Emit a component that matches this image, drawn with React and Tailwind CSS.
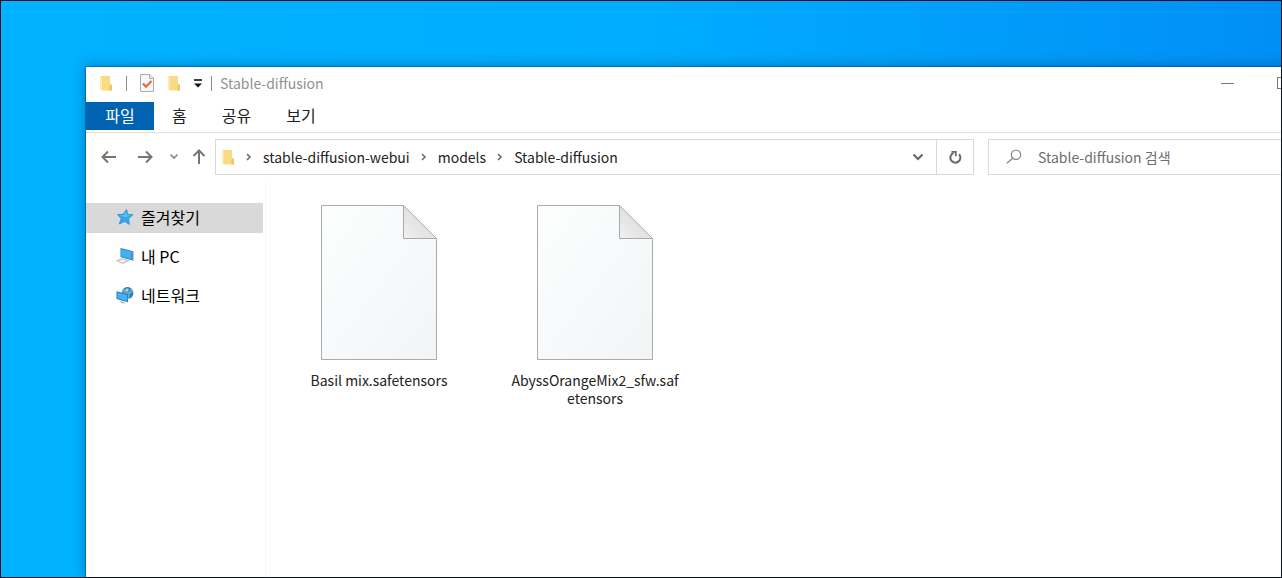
import React, { useState } from 'react';

const FolderIcon = () => (
  <svg width="14" height="16" viewBox="0 0 14 16" className="shrink-0">
    <path d="M1 1h8v13H1z" fill="#f3cf6b" />
    <path d="M2 1h9v8l2 1v5.5H3z" fill="#f9db84" />
    <path d="M1 1l2 1v13.5l-2-1z" fill="#fdeab0" />
    <path d="M10.5 9l2.500 1v5.500h-2.500z" fill="#efc75c" />
  </svg>
);

const PropertiesIcon = () => (
  <svg width="16" height="18" viewBox="0 0 16 18" className="shrink-0">
    <path d="M1.5.5h9.5l3.5 3.5v13.5h-13z" fill="#f6f7f8" stroke="#a9acb0" />
    <path d="M10.5.5v4h4" fill="#e4e5e7" stroke="#a9acb0" />
    <path d="M4 9.5l3 3.2 5.5-5.7" fill="none" stroke="#e9683c" strokeWidth="2.2" />
  </svg>
);

const CustomizeIcon = () => (
  <svg width="10" height="10" viewBox="0 0 10 10">
    <path d="M1 2h8" stroke="#111" strokeWidth="1.6" />
    <path d="M1 5.5h8L5 9.5z" fill="#111" />
  </svg>
);

const ArrowIcon = ({ className }) => (
  <svg width="16" height="16" viewBox="0 0 16 16" className={className}>
    <path d="M1.5 8H15M7 2.5L1.5 8 7 13.5" fill="none" stroke="#757575" strokeWidth="2" />
  </svg>
);

const ChevronRight = () => (
  <svg width="6" height="8" viewBox="0 0 6 8" className="shrink-0">
    <path d="M1 1l3 3-3 3" fill="none" stroke="#6b6b6b" strokeWidth="1.6" />
  </svg>
);

const RefreshIcon = () => (
  <svg width="14" height="14" viewBox="0 0 14 14">
    <path d="M11 4.2A5 5 0 1 1 5.5 3" fill="none" stroke="#6b6b6b" strokeWidth="2" />
    <path d="M3.5 1.8h4.3v4.4" fill="none" stroke="#6b6b6b" strokeWidth="1.8" />
  </svg>
);

const SearchIcon = () => (
  <svg width="16" height="16" viewBox="0 0 16 16" className="shrink-0">
    <circle cx="10" cy="5.7" r="4.7" fill="none" stroke="#858585" strokeWidth="1.2" />
    <path d="M6.7 9.2L.8 14.2" stroke="#858585" strokeWidth="1.3" />
  </svg>
);

const StarIcon = () => (
  <svg width="18" height="18" viewBox="0 0 18 18">
    <path
      d="M10.500 1.500l1.300 4.700 5.200.6-4.300 3.800.6 5.900-4.500-3-5.600 2.500 1.900-5.400L1.500 6.500l5.600-.2z"
      fill="#35a6ee"
      stroke="#2b8fd6"
      strokeWidth=".8"
    />
    <path d="M10.200 3.500l.8 3.500 3.600.5-4.800 2L3.800 7.200l3.800-.1z" fill="#5bbdf8" />
  </svg>
);

const PcIcon = () => (
  <svg width="18" height="18" viewBox="0 0 18 18">
    <path d="M4.5 1l12 3v9.5l-12-3.5z" fill="#2c83bd" />
    <path d="M5.2 2l10.3 2.7v7.5L5.2 9.3z" fill="#42b0f3" />
    <path d="M16.5 4l.9.5v9.3l-.9-.3z" fill="#47647a" />
    <path d="M.5 13.5l6-2 6.5 2.2-6.5 2.900z" fill="#d3d7da" stroke="#a9adb1" strokeWidth=".6" />
    <path d="M3 13.7l3.8-1.2 3.5 1.2-4 1.6z" fill="#f2f3f4" />
  </svg>
);

const NetworkIcon = () => (
  <svg width="18" height="18" viewBox="0 0 18 18">
    <circle cx="11.5" cy="7" r="6" fill="#5fa6cf" />
    <path d="M8 2.5c2-1.7 5-1.6 7 .2l-2 2.5-3 .4zM14 8l3-2c.5 3-1 5.7-3.4 6.5z" fill="#2e7daf" />
    <path d="M8.7 4l2.4-1.7 2 1-2 2.7z" fill="#a8d5ea" />
    <path d="M.5 5.2l11.500 3v8L.5 13z" fill="#2578b5" />
    <path d="M1.4 6.4l9.8 2.500v6L1.4 12.2z" fill="#43b1f5" />
    <path d="M4 15l3.6 1 1.8 1.4-4-.4z" fill="#9aa7b0" />
  </svg>
);

const FileIcon = () => (
  <svg width="116" height="155" viewBox="0 0 116 155">
    <defs>
      <linearGradient id="page" x1="0" y1="0" x2="1" y2="1">
        <stop offset="0" stopColor="#fdfefe" />
        <stop offset="1" stopColor="#f2f4f6" />
      </linearGradient>
      <linearGradient id="fold" x1="0" y1="1" x2="1" y2="0">
        <stop offset="0" stopColor="#f1f1f2" />
        <stop offset="1" stopColor="#d2d3d4" />
      </linearGradient>
    </defs>
    <path d="M.5.5h82l33 33v121H.5z" fill="url(#page)" stroke="#a9abac" />
    <path d="M82.5.5v33h33z" fill="url(#fold)" stroke="#a9abac" />
  </svg>
);

const places = [
  { name: '즐겨찾기', icon: StarIcon },
  { name: '내 PC', icon: PcIcon },
  { name: '네트워크', icon: NetworkIcon },
];

const tabs = ['홈', '공유', '보기'];
const path = ['stable-diffusion-webui', 'models', 'Stable-diffusion'];
const files = ['Basil mix.safetensors', 'AbyssOrangeMix2_sfw.safetensors'];

const TitleBar = () => (
  <header className="flex h-[35px] items-center pb-[3px] pl-[13px]">
    <FolderIcon />
    <span className="ml-[13px] h-[15px] w-px bg-[#8c8c8c]" />
    <div className="ml-3 flex items-center gap-3">
      <button aria-label="속성">
        <PropertiesIcon />
      </button>
      <button aria-label="새 폴더">
        <FolderIcon />
      </button>
      <button aria-label="사용자 지정">
        <CustomizeIcon />
      </button>
    </div>
    <span className="ml-2 h-[15px] w-px bg-[#8c8c8c]" />
    <h1 className="ml-2 text-[#919191]">Stable-diffusion</h1>
    <div className="ml-auto flex h-full">
      <button aria-label="최소화" className="flex w-[55px] items-center justify-center">
        <span className="h-px w-[13px] bg-[#777]" />
      </button>
      <button aria-label="최대화" className="flex w-[55px] items-center justify-center">
        <span className="size-3 border border-[#777]" />
      </button>
      <button aria-label="닫기" className="w-[55px]" />
    </div>
  </header>
);

const AddressBar = () => (
  <div className="flex items-center pt-[6px] pl-[15px]">
    <button aria-label="뒤로">
      <ArrowIcon />
    </button>
    <button aria-label="앞으로" className="ml-5">
      <ArrowIcon className="rotate-180" />
    </button>
    <button aria-label="최근 위치" className="ml-4">
      <svg width="10" height="8" viewBox="0 0 10 8">
        <path d="M1.5 1.5L5 5l3.5-3.5" fill="none" stroke="#858585" strokeWidth="1.6" />
      </svg>
    </button>
    <button aria-label="위로" className="ml-3">
      <ArrowIcon className="rotate-90" />
    </button>
    <nav className="ml-2 flex h-9 min-w-0 flex-1 items-center border border-[#d9d9d9] pl-[5px]">
      <FolderIcon />
      {path.map((part) => (
        <div key={part} className="ml-[11px] flex items-center gap-[11px]">
          <ChevronRight />
          <button className="whitespace-nowrap">{part}</button>
        </div>
      ))}
      <button aria-label="이전 위치" className="ml-auto flex h-full w-9 items-center justify-center">
        <svg width="12" height="8" viewBox="0 0 12 8">
          <path d="M1.5 1.5L6 6l4.5-4.5" fill="none" stroke="#666" strokeWidth="2" />
        </svg>
      </button>
      <button aria-label="새로 고침" className="flex h-full w-[37px] items-center justify-center border-l border-[#d9d9d9]">
        <RefreshIcon />
      </button>
    </nav>
    <label className="ml-[14px] flex h-9 w-[377px] items-center gap-4 border border-[#d9d9d9] pl-[17px]">
      <SearchIcon />
      <input
        type="search"
        aria-label="검색"
        placeholder="Stable-diffusion 검색"
        className="min-w-0 flex-1 outline-none placeholder:text-[#6d6d6d] placeholder:opacity-100"
      />
    </label>
  </div>
);

const App = () => {
  const [current, setCurrent] = useState('즐겨찾기');

  return (
    <div className="flex min-h-screen flex-col overflow-hidden border border-[#08111f] bg-linear-to-r from-[#00b2ff] via-[#00adff] to-[#008ff5] pt-[66px] pl-[85px] font-['Noto_Sans_CJK_KR',sans-serif] text-[14px] leading-[18px] text-[#222]">
      {/* The window runs past the right edge of the desktop */}
      <main className="-mr-[84px] flex flex-1 flex-col bg-white shadow-[0_0_0_1px_rgba(0,70,110,0.45),0_0_12px_rgba(0,40,80,0.45)]">
        <TitleBar />

        <div className="flex h-[31px] items-start gap-px border-b border-[#dfdfdf] text-[16px]">
          <button className="h-7 w-[68px] bg-[#0063b1] pb-[2px] text-white">파일</button>
          {tabs.map((tab) => (
            <button key={tab} className="h-7 px-[17px] pb-[2px]">
              {tab}
            </button>
          ))}
        </div>

        <AddressBar />

        <div className="flex flex-1 pt-2">
          <aside className="w-[180px] shrink-0 border-r border-[#f5f5f5] pt-5 pr-[2px]">
            <ul className="flex flex-col gap-[9px] text-[16px]">
              {places.map(({ name, icon: Icon }) => (
                <li key={name}>
                  <button
                    onClick={() => setCurrent(name)}
                    className={`flex h-[30px] w-full items-center gap-[7px] pb-[2px] pl-[30px] text-black ${
                      current === name ? 'bg-[#d9d9d9]' : ''
                    }`}
                  >
                    <Icon />
                    {name}
                  </button>
                </li>
              ))}
            </ul>
          </aside>

          <ul className="flex flex-wrap content-start gap-[44px] pt-[22px] pl-[27px]">
            {files.map((file) => (
              <li key={file} className="flex w-[172px] flex-col items-center gap-[11px]">
                <FileIcon />
                <span className="w-full text-center break-all">{file}</span>
              </li>
            ))}
          </ul>
        </div>
      </main>
    </div>
  );
};

export default App;
